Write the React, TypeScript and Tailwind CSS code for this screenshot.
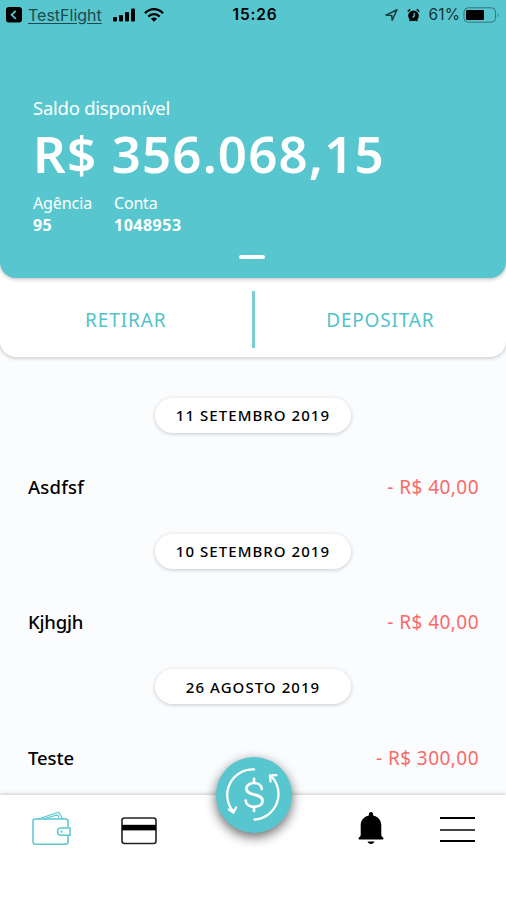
type Entry = {
  date: string;
  name: string;
  nameClass: string;
  amount: string;
};

const entries: Entry[] = [
  { date: '11 SETEMBRO 2019', name: 'Asdfsf', nameClass: 'tracking-[0.2px]', amount: '- R$ 40,00' },
  { date: '10 SETEMBRO 2019', name: 'Kjhgjh', nameClass: 'tracking-[-0.2px]', amount: '- R$ 40,00' },
  { date: '26 AGOSTO 2019', name: 'Teste', nameClass: 'tracking-[-0.1px]', amount: '- R$ 300,00' },
];

function StatusBar() {
  return (
    <div className="grid h-[30px] grid-cols-[1fr_auto_1fr] items-center px-[6px] font-['Inter',sans-serif] text-black">
      <div className="flex items-center">
        <svg width="16" height="16" viewBox="0 0 16 16">
          <rect width="16" height="15.5" rx="3" fill="#000" />
          <path d="M9.8 3.8 5.6 7.8l4.2 4" fill="none" stroke="#58c6ce" strokeWidth="1.8" />
        </svg>
        <span className="ml-[6px] text-[16px] leading-5 text-[#1d4b4f] underline underline-offset-2">TestFlight</span>
        <svg className="ml-[11px]" width="23" height="14" viewBox="0 0 23 14">
          <rect x="0" y="9" width="4" height="4.5" rx="1" />
          <rect x="6" y="7" width="4" height="6.5" rx="1" />
          <rect x="12" y="4" width="4" height="9.5" rx="1" />
          <rect x="18" y="0.5" width="4" height="13" rx="1" />
        </svg>
        <svg className="ml-[8px]" width="20" height="14" viewBox="0 0 20 14">
          <g fill="none" stroke="#000" strokeWidth="2.3">
            <path d="M1 5.3C6-.2 14-.2 19 5.3" />
            <path d="M4.3 8.6c3.2-3.3 8.2-3.3 11.4 0" />
          </g>
          <path d="M6.9 10.7c1.8-1.6 4.4-1.6 6.2 0L10 13.8z" />
        </svg>
      </div>
      <span className="ml-[4px] text-[15.5px] font-semibold tracking-[0.8px]">15:26</span>
      <div className="flex items-center justify-end">
        <svg width="13" height="12" viewBox="0 0 13 12">
          <path d="M1 6.1 12 .8 7.2 11.2 6.7 6.5z" fill="none" stroke="#173b3e" strokeWidth="1.5" strokeLinejoin="round" />
        </svg>
        <svg className="ml-[9px]" width="13" height="14" viewBox="0 0 13 14">
          <circle cx="6.5" cy="7.7" r="5.3" />
          <path d="M.8 3.5 3.2 1.2M12.2 3.5 9.8 1.2M2.6 12.9l1.3-1.4M10.4 12.9l-1.3-1.4" stroke="#000" strokeWidth="1.5" />
          <path d="M7.2 4.8v3.3L5.6 9.5" fill="none" stroke="#58c6ce" strokeWidth="1.3" />
        </svg>
        <span className="ml-[9px] text-[15.5px] tracking-[0.1px] text-[#143538]">61%</span>
        <svg className="ml-[3px]" width="37" height="16" viewBox="0 0 37 16">
          <rect x="1" y="0.8" width="31.5" height="14.4" rx="4" fill="none" stroke="#35777c" strokeWidth="1" />
          <rect x="3" y="3" width="18" height="10" rx="1" />
          <path d="M34.5 6v4c1.3-.4 1.3-3.6 0-4z" fill="#35777c" />
        </svg>
      </div>
    </div>
  );
}

function BalanceCard() {
  return (
    <section className="relative h-[278px] rounded-b-[16px] bg-[#58c6ce] text-white shadow-[0_1px_4px_rgba(0,0,0,0.28)]">
      <StatusBar />
      <div className="pt-[64px] pl-[33px]">
        <p className="text-[18.5px] leading-[28px] tracking-[-0.25px]">Saldo disponível</p>
        <p className="mt-[-1px] text-[51px] leading-[64px] font-semibold tracking-[1.15px] whitespace-nowrap">R$ 356.068,15</p>
        <div className="mt-[7px] flex text-[16px] leading-[22px]">
          <div className="w-[81px]">
            <p className="tracking-[-0.1px]">Agência</p>
            <p className="font-bold tracking-[0.3px]">95</p>
          </div>
          <div>
            <p className="tracking-[-0.2px]">Conta</p>
            <p className="font-bold tracking-[0.5px]">1048953</p>
          </div>
        </div>
      </div>
      <div className="mt-[19px] ml-[239px] h-[4px] w-[26px] rounded-full bg-white" />
    </section>
  );
}

function Actions() {
  return (
    <div className="flex h-[79px] items-center text-[19px] text-[#52c3cb]">
      <button className="flex-1 pt-[6px] tracking-[0.9px]">RETIRAR</button>
      <div className="mb-[-4px] h-[57px] w-[3px] bg-[#7bcfd3]" />
      <button className="flex-1 pt-[6px] tracking-[0.8px]">DEPOSITAR</button>
    </div>
  );
}

function EntryGroup({ date, name, nameClass, amount }: Entry) {
  return (
    <li className="h-[135.7px]">
      <div className="mx-auto flex h-[35px] w-[196px] items-center justify-center rounded-full bg-white text-[15px] font-medium tracking-[1.05px] text-black shadow-[0_1px_4px_rgba(0,0,0,0.2)]">
        {date}
      </div>
      <div className="mt-[39.5px] flex items-center justify-between pr-[27px] pl-[28px] text-[18.5px] leading-[28px]">
        <span className={`font-medium text-black ${nameClass}`}>{name}</span>
        <span className="text-[19px] tracking-[0.45px] text-[#f96a6a]">{amount}</span>
      </div>
    </li>
  );
}

function WalletIcon() {
  return (
    <svg width="40" height="36" viewBox="0 0 40 36" fill="none" stroke="#5bc7cf" strokeWidth="1.5" strokeLinejoin="round">
      <path d="M36 16v-5.5q0-2.5-2.5-2.5H3Q1 8 1 10v21Q1 33.3 3.5 33.3h30q2.5 0 2.5-2.5V24" />
      <path d="M6 8 26.5 1.2 31 8M11 8l14.500-4.200L27.500 8" strokeWidth="1.200" />
      <path d="M28.5 17H38v7.2h-9.5q-3-.3-3-3.6t3-3.6z" />
      <circle cx="29.5" cy="20.6" r=".8" strokeWidth="1" />
    </svg>
  );
}

function CardIcon() {
  return (
    <svg width="36" height="28" viewBox="0 0 36 28">
      <rect x="1" y="1" width="34" height="25.5" rx="2.5" fill="none" stroke="#222" strokeWidth="1.6" />
      <rect x="1" y="7.8" width="34" height="5.6" />
    </svg>
  );
}

function BellIcon() {
  return (
    <svg width="26" height="33" viewBox="0 0 26 33">
      <path d="M13 0c1.3 0 2.1 1 2.1 2.2v1.2c5 1.3 8.2 4.7 8.2 9.8v9.5c0 1.3.5 1.8 1.5 2.6.9.7 1.2 2.2-.3 2.2h-23c-1.5 0-1.2-1.5-.3-2.2 1-.8 1.5-1.3 1.5-2.6v-9.5c0-5.1 3.2-8.5 8.2-9.8V2.2C10.9 1 11.7 0 13 0z" />
      <path d="M9.5 29.5h7c-.7 3.3-6.3 3.3-7 0z" />
    </svg>
  );
}

function TransferButton() {
  return (
    <button className="absolute top-[-38px] left-[216px] flex size-[76px] items-center justify-center rounded-full bg-[#58c6ce] shadow-[0_4px_12px_rgba(0,0,0,0.6)]">
      <svg width="76" height="76" viewBox="0 0 76 76" fill="none" stroke="#fff" strokeWidth="2.3" strokeLinecap="round" strokeLinejoin="round">
        <path d="M38 12.5A25.5 25.5 0 0 0 17.3 54.5M13 52.5l4.5 3 2.5-5" />
        <path d="M38.5 62.5A25.5 25.5 0 0 0 55.5 19.5M54.5 24.5 54 18.5l6.5-.3" />
        <path d="M45.8 32c-.3-3.9-3.8-6-7.800-6-4.400 0-7.600 2.300-7.600 5.700 0 7.800 16.200 4 16.200 12.100 0 3.800-3.500 6-8.300 6-4.700 0-8.300-2.200-8.600-6.300M38 21.800V26M38 49.800V54" strokeWidth="2.7" />
      </svg>
    </button>
  );
}

function TabBar() {
  return (
    <nav className="relative h-[105px] shrink-0 bg-white shadow-[0_-1px_4px_rgba(0,0,0,0.2)]">
      <TransferButton />
      <div className="flex h-[53px] items-start">
        <div className="mt-[16px] ml-[32px]"><WalletIcon /></div>
        <div className="mt-[22px] ml-[49px]"><CardIcon /></div>
        <div className="mt-[17px] ml-[201px]"><BellIcon /></div>
        <div className="mt-[22px] ml-[56px] flex w-[35px] flex-col">
          <span className="h-[2px] bg-black" />
          <span className="mt-[10px] h-[2px] bg-[#444]" />
          <span className="mt-[9px] h-[2px] bg-black" />
        </div>
      </div>
      {/* área segura: cobre a sombra do botão */}
      <div className="relative h-[52px] bg-white" />
    </nav>
  );
}

export default function App() {
  return (
    <main className="flex h-[900px] w-[506px] flex-col overflow-hidden bg-[#fbfcfe] font-['Noto_Sans',sans-serif]">
      <header className="relative shrink-0 rounded-b-[16px] bg-white shadow-[0_1px_4px_rgba(0,0,0,0.24)]">
        <BalanceCard />
        <Actions />
      </header>
      <ul className="min-h-0 flex-1 pt-[41px]">
        {entries.map((e) => (
          <EntryGroup key={e.date} {...e} />
        ))}
      </ul>
      <TabBar />
    </main>
  );
}
